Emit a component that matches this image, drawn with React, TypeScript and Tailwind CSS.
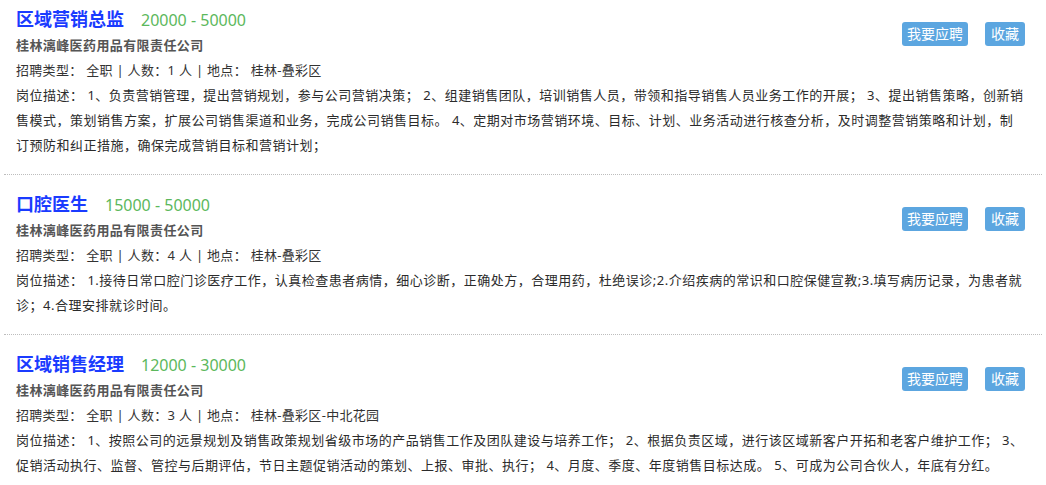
const jobs = [
  {
    title: '区域营销总监',
    salary: '20000 - 50000',
    company: '桂林漓峰医药用品有限责任公司',
    count: 1,
    place: '桂林-叠彩区',
    desc: [
      '岗位描述： 1、负责营销管理，提出营销规划，参与公司营销决策； 2、组建销售团队，培训销售人员，带领和指导销售人员业务工作的开展； 3、提出销售策略，创新销',
      '售模式，策划销售方案，扩展公司销售渠道和业务，完成公司销售目标。 4、定期对市场营销环境、目标、计划、业务活动进行核查分析，及时调整营销策略和计划，制',
      '订预防和纠正措施，确保完成营销目标和营销计划；',
    ],
  },
  {
    title: '口腔医生',
    salary: '15000 - 50000',
    company: '桂林漓峰医药用品有限责任公司',
    count: 4,
    place: '桂林-叠彩区',
    desc: [
      '岗位描述： 1.接待日常口腔门诊医疗工作，认真检查患者病情，细心诊断，正确处方，合理用药，杜绝误诊;2.介绍疾病的常识和口腔保健宣教;3.填写病历记录，为患者就',
      '诊；4.合理安排就诊时间。',
    ],
  },
  {
    title: '区域销售经理',
    salary: '12000 - 30000',
    company: '桂林漓峰医药用品有限责任公司',
    count: 3,
    place: '桂林-叠彩区-中北花园',
    desc: [
      '岗位描述： 1、按照公司的远景规划及销售政策规划省级市场的产品销售工作及团队建设与培养工作； 2、根据负责区域，进行该区域新客户开拓和老客户维护工作； 3、',
      '促销活动执行、监督、管控与后期评估，节日主题促销活动的策划、上报、审批、执行； 4、月度、季度、年度销售目标达成。 5、可成为公司合伙人，年底有分红。',
    ],
  },
]

type Job = (typeof jobs)[number]

function JobItem({ job }: { job: Job }) {
  return (
    <div className="px-3 pt-4 pb-4 first:pt-[6px] border-b border-dotted border-[#bdbdbd] last:border-b-0">
      <div className="flex justify-between">
        <div>
          <div className="flex items-baseline gap-[17px] h-[26px] leading-[26px]">
            <span className="text-[18px] font-bold text-[#1a3bff]">{job.title}</span>
            <span className="text-[16px] text-[#5cb85c]">{job.salary}</span>
          </div>
          <div className="text-[13px] font-bold text-[#555] leading-[26px] tracking-[0.4px]">{job.company}</div>
          <div className="text-[13px] text-[#333] leading-[25px] tracking-[0.3px]">
            招聘类型： 全职 | 人数：{job.count} 人 | 地点： {job.place}
          </div>
        </div>
        <div className="flex gap-[17px] mt-4 mr-[5px] items-start">
          <button className="h-6 px-[5px] rounded-[3px] bg-[#5ca6e0] text-white text-[14px] leading-6">
            我要应聘
          </button>
          <button className="h-6 px-[6px] rounded-[3px] bg-[#5ca6e0] text-white text-[14px] leading-6">
            收藏
          </button>
        </div>
      </div>
      <div className="text-[13px] text-[#2b2b2b] leading-[25px] tracking-[0.5px]">
        {job.desc.map((line, i) => (
          <div key={i} className="whitespace-nowrap">
            {line}
          </div>
        ))}
      </div>
    </div>
  )
}

export default function App() {
  return (
    <div
      className="w-[1046px] min-h-[485px] bg-white px-1"
      style={{ fontFamily: '"Noto Sans", "Noto Sans CJK SC", sans-serif' }}
    >
      {jobs.map((job) => (
        <JobItem key={job.title} job={job} />
      ))}
    </div>
  )
}
